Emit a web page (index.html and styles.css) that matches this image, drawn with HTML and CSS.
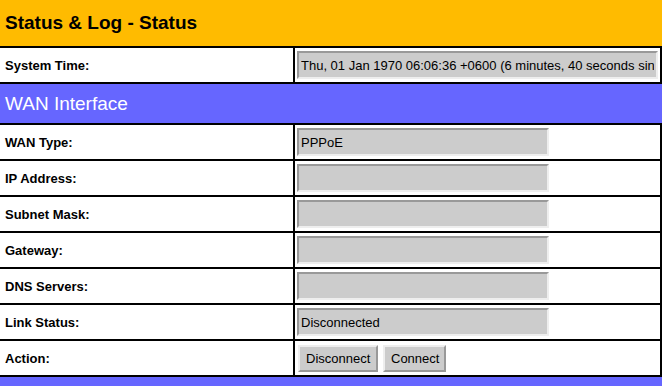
FILE: index.html
```html
<!DOCTYPE html>
<html>
<head>
    <title>Status &amp; Log - Status</title>
    <link rel="stylesheet" href="styles.css">
</head>
<body>
    <table class="status">
        <colgroup>
            <col class="col-label">
            <col class="col-value">
        </colgroup>
        <tr>
            <td colspan="2" class="title">Status &amp; Log - Status</td>
        </tr>
        <tr>
            <td class="label">System Time:</td>
            <td class="value"><input type="text" class="field wide" value="Thu, 01 Jan 1970 06:06:36 +0600 (6 minutes, 40 seconds since boot)" readonly></td>
        </tr>
        <tr>
            <td colspan="2" class="section">WAN Interface</td>
        </tr>
        <tr>
            <td class="label">WAN Type:</td>
            <td class="value"><input type="text" class="field" value="PPPoE" readonly></td>
        </tr>
        <tr>
            <td class="label">IP Address:</td>
            <td class="value"><input type="text" class="field" value="" readonly></td>
        </tr>
        <tr>
            <td class="label">Subnet Mask:</td>
            <td class="value"><input type="text" class="field" value="" readonly></td>
        </tr>
        <tr>
            <td class="label">Gateway:</td>
            <td class="value"><input type="text" class="field" value="" readonly></td>
        </tr>
        <tr>
            <td class="label">DNS Servers:</td>
            <td class="value"><input type="text" class="field" value="" readonly></td>
        </tr>
        <tr>
            <td class="label">Link Status:</td>
            <td class="value"><input type="text" class="field" value="Disconnected" readonly></td>
        </tr>
        <tr>
            <td class="label">Action:</td>
            <td class="value">
                <div class="actions">
                    <button class="btn btn-disc">Disconnect</button>
                    <button class="btn btn-conn">Connect</button>
                </div>
            </td>
        </tr>
        <tr>
            <td colspan="2" class="section bottom">&nbsp;</td>
        </tr>
    </table>
</body>
</html>
```

FILE: styles.css
```css
body {
    margin: 0;
    padding: 0;
    background-color: #fff;
    font-family: "Liberation Sans", Arial, sans-serif;
    font-size: 13px;
    color: #000;
}

.status {
    width: 662px;
    border-collapse: separate;
    border-spacing: 0;
    table-layout: fixed;
}

.col-label {
    width: 295px;
}

.status td {
    box-sizing: border-box;
    padding: 0;
    border-bottom: 2px solid #000;
}

.title {
    height: 48px;
    background-color: #ffbb00;
    font-size: 19px;
    font-weight: bold;
    padding-left: 5px !important;
}

.section {
    height: 41px;
    background-color: #6666ff;
    color: #fff;
    font-size: 19px;
    padding-left: 5px !important;
}

.section.bottom {
    border-bottom: none !important;
}

.label {
    height: 36px;
    padding: 1px 0 0 5px !important;
    font-weight: bold;
    border-right: 2px solid #000;
}

.value {
    height: 36px;
    padding-left: 2px !important;
    border-right: 2px solid #000;
}

.field {
    display: block;
    box-sizing: border-box;
    width: 252px;
    height: 28px;
    margin: 0;
    padding: 0 2px;
    background-color: #cccccc;
    border: 2px solid;
    border-color: #999 #eee #eee #999;
    font-family: "Liberation Sans", Arial, sans-serif;
    font-size: 13px;
    color: #000;
    outline: none;
}

.field.wide {
    width: 361px;
}

.actions {
    display: flex;
    gap: 5px;
    padding-left: 1px;
}

.btn {
    box-sizing: border-box;
    height: 27px;
    padding: 0 6px;
    background-color: #cccccc;
    border: 2px solid;
    border-color: #eee #999 #999 #eee;
    font-family: "Liberation Sans", Arial, sans-serif;
    font-size: 13px;
    color: #000;
}

.btn-disc {
    width: 80px;
}

.btn-conn {
    width: 63px;
}
```
